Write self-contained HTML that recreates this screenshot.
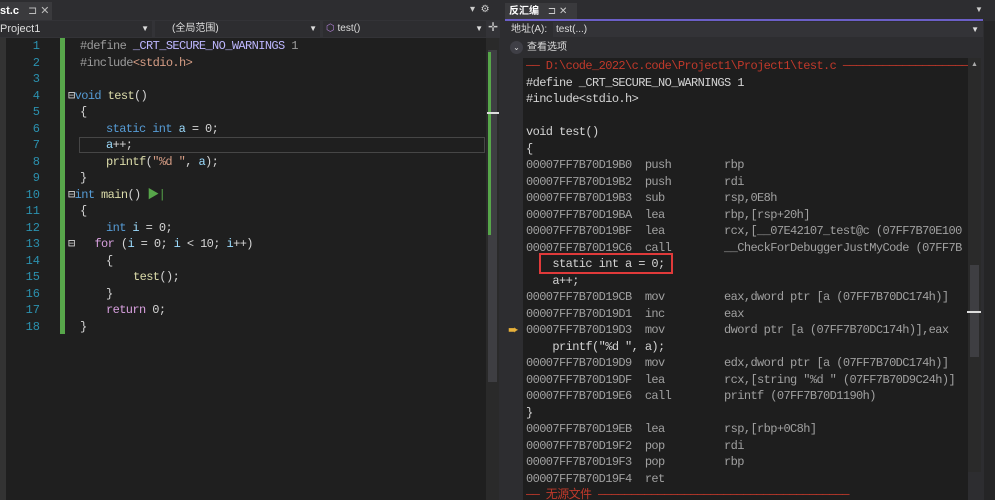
<!DOCTYPE html>
<html><head><meta charset="utf-8"><style>
*{margin:0;padding:0;box-sizing:border-box}
body{width:995px;height:500px;background:#2d2d30;position:relative;overflow:hidden;font-family:"Liberation Sans","Noto Sans CJK SC",sans-serif;color:#ddd}
.a{position:absolute}
.mono{font-family:"Liberation Mono","Noto Sans CJK SC",monospace;font-size:12px;letter-spacing:-0.6px;white-space:pre;line-height:16.5px}
.ln{position:absolute;left:0;width:40px;text-align:right;color:#2b91af;letter-spacing:0}
.k{color:#569cd6}.p{color:#9b9b9b}.m{color:#beb7ff}.s{color:#d69d85}.f{color:#dcdcaa}.v{color:#9cdcfe}.c{color:#d8a0df}.n{color:#b5cea8}.t{color:#d4d4d4}
.row{position:absolute;height:16.5px;left:0}
.ad{color:#a0a0a0}
</style></head><body>
<div class="a" style="left:0;top:0;width:500px;height:20px;background:#2d2d30"></div>
<div class="a" style="left:0;top:2px;width:52px;height:18px;background:#3a3a3d;font-size:11px;line-height:18px;color:#fff;font-weight:bold">st.c <span style="font-weight:normal;color:#bbb;margin-left:6px">⊐ ✕</span></div>
<div class="a" style="left:470px;top:4px;font-size:10px;color:#ccc">▾&nbsp;&nbsp;⚙</div>
<div class="a" style="left:0;top:20px;width:500px;height:18px;background:#333337"></div>
<div class="a" style="left:0;top:21px;width:152px;height:16px;background:#2d2d30;font-size:11px;line-height:16px;color:#ddd">Project1<span style="position:absolute;right:3px;font-size:8px">▼</span></div>
<div class="a" style="left:155px;top:21px;width:165px;height:16px;background:#2d2d30;font-size:10px;line-height:16px;color:#ddd;padding-left:17px">(全局范围)<span style="position:absolute;right:3px;font-size:8px">▼</span></div>
<div class="a" style="left:323px;top:21px;width:163px;height:16px;background:#2d2d30;font-size:10px;line-height:16px;color:#ddd;padding-left:3px"><span style="color:#b180d7">⬡</span> test()<span style="position:absolute;right:3px;font-size:8px">▼</span></div>
<div class="a" style="left:488px;top:20px;font-size:12px;color:#ccc">✛</div>
<div class="a" style="left:6px;top:38px;width:480px;height:462px;background:#1f1f1f"></div>
<div class="a" style="left:0;top:38px;width:6px;height:462px;background:#333"></div>
<div class="a" style="left:60px;top:38px;width:5px;height:296px;background:#57a64a"></div>
<div class="a" style="left:486px;top:38px;width:13px;height:462px;background:#2a2a2a"></div>
<div class="a" style="left:488px;top:50px;width:9px;height:332px;background:#3e3e42"></div>
<div class="a" style="left:488px;top:52px;width:3px;height:183px;background:#57a64a"></div>
<div class="a" style="left:487px;top:112px;width:12px;height:2px;background:#ddd"></div>
<div class="a" style="left:79px;top:137px;width:406px;height:16px;border:1px solid #464646"></div>
<div class="a mono" style="left:0;top:38px;width:486px">
<div class="row" style="top:0"><span class="ln">1</span><span style="position:absolute;left:80px" class="p">#define <span class="m">_CRT_SECURE_NO_WARNINGS</span> 1</span></div>
<div class="row" style="top:16.5px"><span class="ln">2</span><span style="position:absolute;left:80px" class="p">#include<span class="s">&lt;stdio.h&gt;</span></span></div>
<div class="row" style="top:33px"><span class="ln">3</span></div>
<div class="row" style="top:49.5px"><span class="ln">4</span><span style="position:absolute;left:68px" class="t">⊟<span class="k">void</span> <span class="f">test</span>()</span></div>
<div class="row" style="top:66px"><span class="ln">5</span><span style="position:absolute;left:80px" class="t">{</span></div>
<div class="row" style="top:82.5px"><span class="ln">6</span><span style="position:absolute;left:106px"><span class="k">static int</span> <span class="v">a</span> <span class="t">= 0;</span></span></div>
<div class="row" style="top:99px"><span class="ln">7</span><span style="position:absolute;left:106px"><span class="v">a</span><span class="t">++;</span></span></div>
<div class="row" style="top:115.5px"><span class="ln">8</span><span style="position:absolute;left:106px"><span class="f">printf</span><span class="t">(</span><span class="s">"%d "</span><span class="t">, </span><span class="v">a</span><span class="t">);</span></span></div>
<div class="row" style="top:132px"><span class="ln">9</span><span style="position:absolute;left:80px" class="t">}</span></div>
<div class="row" style="top:148.5px"><span class="ln">10</span><span style="position:absolute;left:68px" class="t">⊟<span class="k">int</span> <span class="f">main</span>() <span style="color:#57a64a">▶|</span></span></div>
<div class="row" style="top:165px"><span class="ln">11</span><span style="position:absolute;left:80px" class="t">{</span></div>
<div class="row" style="top:181.5px"><span class="ln">12</span><span style="position:absolute;left:106px"><span class="k">int</span> <span class="v">i</span> <span class="t">= 0;</span></span></div>
<div class="row" style="top:198px"><span class="ln">13</span><span style="position:absolute;left:68px" class="t">⊟&nbsp;&nbsp;&nbsp;<span class="c">for</span> (<span class="v">i</span> = 0; <span class="v">i</span> &lt; 10; <span class="v">i</span>++)</span></div>
<div class="row" style="top:214.5px"><span class="ln">14</span><span style="position:absolute;left:106px" class="t">{</span></div>
<div class="row" style="top:231px"><span class="ln">15</span><span style="position:absolute;left:133px"><span class="f">test</span><span class="t">();</span></span></div>
<div class="row" style="top:247.5px"><span class="ln">16</span><span style="position:absolute;left:106px" class="t">}</span></div>
<div class="row" style="top:264px"><span class="ln">17</span><span style="position:absolute;left:106px"><span class="c">return</span> <span class="t">0;</span></span></div>
<div class="row" style="top:280.5px"><span class="ln">18</span><span style="position:absolute;left:80px" class="t">}</span></div>
</div>
<div class="a" style="left:500px;top:0;width:5px;height:500px;background:#2d2d30"></div>
<div class="a" style="left:505px;top:3px;width:72px;height:17px;background:#3a3a3d;font-size:10px;line-height:17px;color:#fff;padding-left:4px;font-weight:bold">反汇编 <span style="font-weight:normal;color:#ccc;margin-left:6px">⊐ ✕</span></div>
<div class="a" style="left:505px;top:19px;width:478px;height:2px;background:#6b5fc7"></div>
<div class="a" style="left:975px;top:5px;font-size:8px;color:#ccc">▼</div>
<div class="a" style="left:505px;top:21px;width:478px;height:479px;background:#2d2d30"></div>
<div class="a" style="left:511px;top:23px;font-size:10px;line-height:14px;color:#ddd">地址(A):</div>
<div class="a" style="left:553px;top:22px;width:430px;height:15px;background:#333337;font-size:10px;line-height:15px;color:#ddd;padding-left:3px">test(...)<span style="position:absolute;right:4px;font-size:8px">▼</span></div>
<div class="a" style="left:510px;top:41px;width:13px;height:13px;border-radius:50%;background:#3f3f46;font-size:8px;text-align:center;line-height:13px;color:#ddd">⌄</div>
<div class="a" style="left:527px;top:41px;font-size:10px;line-height:14px;color:#ddd">查看选项</div>
<div class="a" style="left:523px;top:58px;width:445px;height:442px;background:#1e1e1e"></div>
<div class="a" style="left:968px;top:58px;width:13px;height:414px;background:#2a2a2a"></div>
<div class="a" style="left:970px;top:265px;width:9px;height:92px;background:#3e3e42"></div>
<div class="a" style="left:967px;top:311px;width:14px;height:2px;background:#ddd"></div>
<div class="a" style="left:971px;top:61px;font-size:7px;color:#aaa">▲</div>
<div class="a" style="left:984px;top:21px;width:11px;height:479px;background:#252526"></div>
<div class="a" style="left:539px;top:253px;width:134px;height:21px;border:2px solid #e03a3a"></div>
<div class="a" style="left:508px;top:322px;color:#e8b13a;font-size:13px">➨</div>
<div class="a mono" style="left:526px;top:58px;width:442px;overflow:hidden;height:442px">
<div class="row" style="top:0;color:#c0392b">── D:\code_2022\c.code\Project1\Project1\test.c ──────────────────────</div>
<div class="row t" style="top:16.5px">#define _CRT_SECURE_NO_WARNINGS 1</div>
<div class="row t" style="top:33px">#include&lt;stdio.h&gt;</div>
<div class="row t" style="top:66px">void test()</div>
<div class="row t" style="top:82.5px">{</div>
<div class="row ad" style="top:99px">00007FF7B70D19B0  push        rbp</div>
<div class="row ad" style="top:115.5px">00007FF7B70D19B2  push        rdi</div>
<div class="row ad" style="top:132px">00007FF7B70D19B3  sub         rsp,0E8h</div>
<div class="row ad" style="top:148.5px">00007FF7B70D19BA  lea         rbp,[rsp+20h]</div>
<div class="row ad" style="top:165px">00007FF7B70D19BF  lea         rcx,[__07E42107_test@c (07FF7B70E100</div>
<div class="row ad" style="top:181.5px">00007FF7B70D19C6  call        __CheckForDebuggerJustMyCode (07FF7B</div>
<div class="row t" style="top:198px">    static int a = 0;</div>
<div class="row t" style="top:214.5px">    a++;</div>
<div class="row ad" style="top:231px">00007FF7B70D19CB  mov         eax,dword ptr [a (07FF7B70DC174h)]</div>
<div class="row ad" style="top:247.5px">00007FF7B70D19D1  inc         eax</div>
<div class="row ad" style="top:264px">00007FF7B70D19D3  mov         dword ptr [a (07FF7B70DC174h)],eax</div>
<div class="row t" style="top:280.5px">    printf("%d ", a);</div>
<div class="row ad" style="top:297px">00007FF7B70D19D9  mov         edx,dword ptr [a (07FF7B70DC174h)]</div>
<div class="row ad" style="top:313.5px">00007FF7B70D19DF  lea         rcx,[string "%d " (07FF7B70D9C24h)]</div>
<div class="row ad" style="top:330px">00007FF7B70D19E6  call        printf (07FF7B70D1190h)</div>
<div class="row t" style="top:346.5px">}</div>
<div class="row ad" style="top:363px">00007FF7B70D19EB  lea         rsp,[rbp+0C8h]</div>
<div class="row ad" style="top:379.5px">00007FF7B70D19F2  pop         rdi</div>
<div class="row ad" style="top:396px">00007FF7B70D19F3  pop         rbp</div>
<div class="row ad" style="top:412.5px">00007FF7B70D19F4  ret</div>
<div class="row" style="top:429px;color:#c0392b">── 无源文件 ──────────────────────────────────────</div>
</div>
</body></html>
